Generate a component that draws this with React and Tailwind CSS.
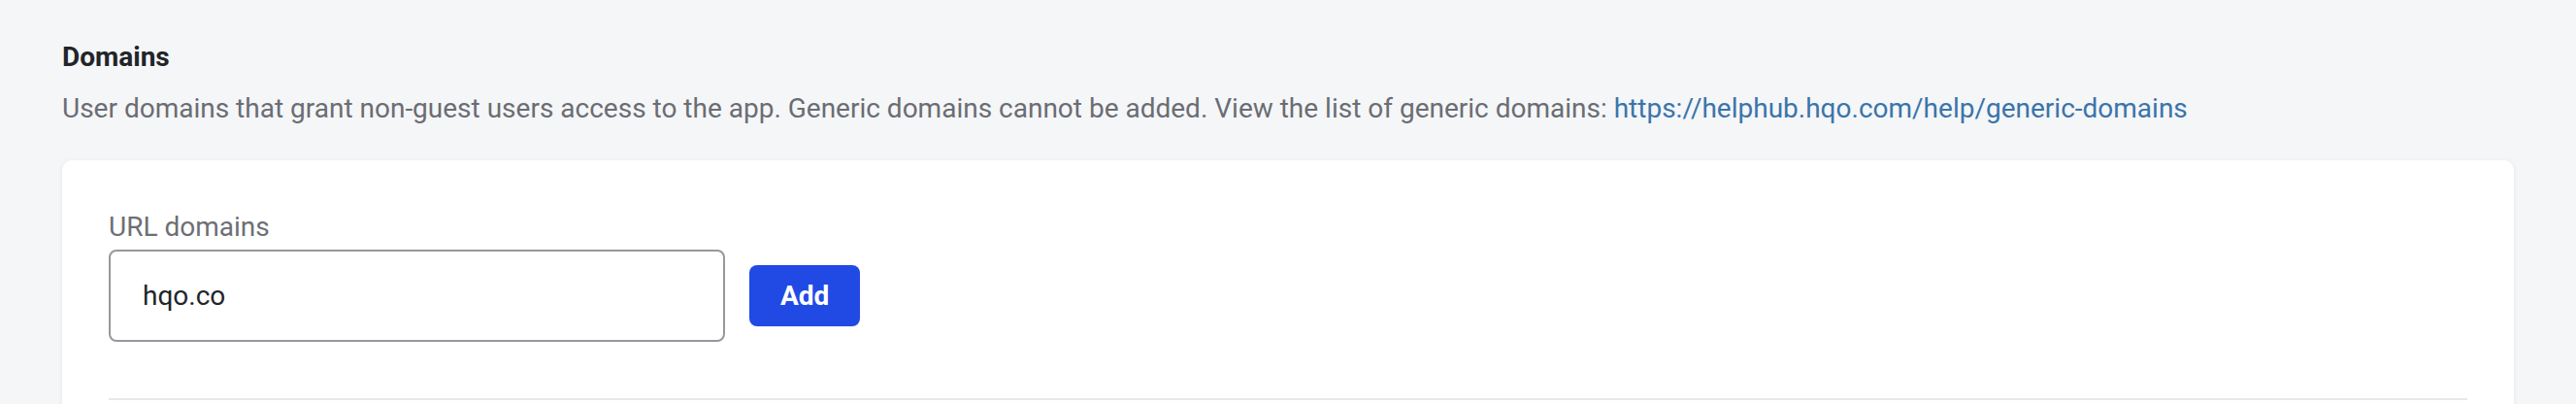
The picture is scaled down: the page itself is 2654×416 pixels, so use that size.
export default function App() {
  return (
    <div className="min-h-[416px] w-full bg-[#f5f6f8] px-[64px] pt-[38px] font-['Roboto',sans-serif]">
      <h2 className="text-[28px] font-bold leading-[41px] text-[#212529]">Domains</h2>
      <p className="mt-[12px] text-[28px] leading-[41px] text-[#6a6d73]">
        User domains that grant non-guest users access to the app. Generic domains cannot be added. View the list of generic domains:{" "}
        <a href="#" className="text-[#3a74aa]">https://helphub.hqo.com/help/generic-domains</a>
      </p>
      <div className="mt-[33px] rounded-[10px] bg-white px-[48px] pt-[48px] pb-[40px] shadow-[0_1px_4px_rgba(0,0,0,0.08)]">
        <label className="block text-[28px] leading-[41px] text-[#6c6f75]">URL domains</label>
        <div className="mt-[3px] flex items-center gap-[25px]">
          <div className="flex h-[95px] w-[635px] items-center rounded-[8px] border-2 border-[#95999e] px-[33px] text-[28px] text-[#212529]">
            hqo.co
          </div>
          <button className="flex h-[63px] items-center rounded-[8px] bg-[#214ae5] px-[32px] text-[28px] font-bold text-white">
            Add
          </button>
        </div>
        <div className="mt-[58px] h-[2px] bg-[#e9e9ea]" />
      </div>
    </div>
  );
}
